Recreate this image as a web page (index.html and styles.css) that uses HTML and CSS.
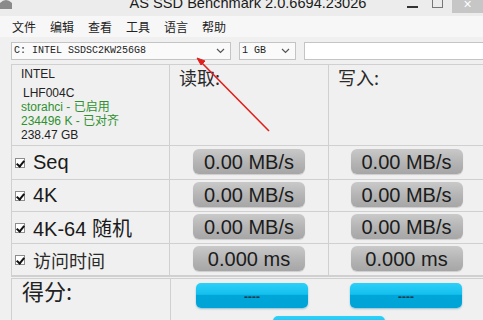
FILE: index.html
```html
<!DOCTYPE html>
<html lang="zh-CN">
<head>
    <meta charset="UTF-8">
    <meta name="viewport" content="width=device-width, initial-scale=1.0">
    <title>AS SSD Benchmark</title>
    <link rel="stylesheet" href="styles.css">
</head>
<body>
    <div class="window">
        <div class="titlebar">
            <svg class="app-icon" width="13" height="10" viewBox="0 0 13 10">
                <path d="M0 10 L0 4 Q6 -2 12 4 L12 10 Z" fill="#8a8a8a"/>
            </svg>
            <div class="title">AS SSD Benchmark 2.0.6694.23026</div>
            <div class="win-btns">
                <span class="win-min"></span>
                <span class="win-max"></span>
                <span class="win-close">×</span>
            </div>
        </div>

        <div class="menubar">
            <span class="menu-item">文件</span>
            <span class="menu-item">编辑</span>
            <span class="menu-item">查看</span>
            <span class="menu-item">工具</span>
            <span class="menu-item">语言</span>
            <span class="menu-item">帮助</span>
        </div>

        <div class="toolbar">
            <div class="combo combo-drive">
                <span>C: INTEL SSDSC2KW256G8</span>
                <svg width="9" height="6" viewBox="0 0 9 6"><path d="M1 1 L4.5 4.5 L8 1" fill="none" stroke="#555" stroke-width="1.2"/></svg>
            </div>
            <div class="combo combo-size">
                <span>1 GB</span>
                <svg width="9" height="6" viewBox="0 0 9 6"><path d="M1 1 L4.5 4.5 L8 1" fill="none" stroke="#555" stroke-width="1.2"/></svg>
            </div>
            <div class="textbox"></div>
        </div>

        <div class="bench">
            <div class="cell info">
                <div class="info-line first">INTEL</div>
                <div class="info-line indent">LHF004C</div>
                <div class="info-line ok">storahci - 已启用</div>
                <div class="info-line ok">234496 K - 已对齐</div>
                <div class="info-line">238.47 GB</div>
            </div>
            <div class="cell head">读取:</div>
            <div class="cell head">写入:</div>

            <div class="cell label"><span class="check"></span><span>Seq</span></div>
            <div class="cell value"><div class="result">0.00 MB/s</div></div>
            <div class="cell value"><div class="result">0.00 MB/s</div></div>

            <div class="cell label"><span class="check"></span><span>4K</span></div>
            <div class="cell value"><div class="result">0.00 MB/s</div></div>
            <div class="cell value"><div class="result">0.00 MB/s</div></div>

            <div class="cell label"><span class="check"></span><span>4K-64 随机</span></div>
            <div class="cell value"><div class="result">0.00 MB/s</div></div>
            <div class="cell value"><div class="result">0.00 MB/s</div></div>

            <div class="cell label"><span class="check"></span><span class="cjk">访问时间</span></div>
            <div class="cell value"><div class="result">0.000 ms</div></div>
            <div class="cell value"><div class="result">0.000 ms</div></div>
        </div>

        <div class="score">
            <div class="score-label">得分:</div>
            <div class="score-area">
                <div class="score-btns">
                    <div class="score-btn">----</div>
                    <div class="score-btn">----</div>
                </div>
                <div class="score-total">
                    <div class="score-btn">----</div>
                </div>
            </div>
        </div>

        <svg class="arrow" width="483" height="320" viewBox="0 0 483 320">
            <line x1="269" y1="131" x2="201" y2="62" stroke="#e0201c" stroke-width="1.6"/>
            <path d="M197 58 L205 61 L201 65 Z" fill="#e0201c" stroke="#e0201c" stroke-width="1"/>
        </svg>
    </div>
</body>
</html>
```

FILE: styles.css
```css
* {
    margin: 0;
    padding: 0;
    box-sizing: border-box;
}

body {
    width: 483px;
    height: 320px;
    overflow: hidden;
    background: #f0f0f0;
    font-family: 'Liberation Sans', Arial, 'Noto Sans CJK SC', sans-serif;
    color: #1a1a1a;
}

.window {
    position: relative;
    height: 320px;
}

/* заголовок окна */
.titlebar {
    height: 16px;
    background: #ececec;
    display: flex;
    align-items: flex-start;
    overflow: hidden;
}

.app-icon {
    display: block;
    margin-top: -1px;
}

.title {
    flex: 1;
    text-align: center;
    font-size: 14.6px;
    line-height: 15px;
    margin-top: -4px;
    padding-left: 76px;
    color: #1a1a1a;
}

.win-btns {
    display: flex;
    align-items: flex-start;
}

.win-min {
    width: 11px;
    height: 2px;
    background: #333;
    margin: 6px 14px 0 0;
}

.win-max {
    width: 11px;
    height: 8px;
    border: 1px solid #777;
    border-top: none;
    margin-right: 9px;
}

.win-close {
    width: 31px;
    height: 13px;
    background: #c6c6c6;
    color: #fff;
    font-size: 14px;
    line-height: 8px;
    text-align: center;
}

/* меню */
.menubar {
    height: 21px;
    background: #f7f7f7;
    display: flex;
    align-items: center;
    padding-left: 12px;
}

.menu-item {
    width: 38px;
    font-size: 12px;
    font-family: 'Noto Sans CJK SC', sans-serif;
    color: #222;
}

.toolbar {
    display: flex;
    align-items: center;
    gap: 8px;
    padding: 3px 0 0 11px;
    height: 24px;
}

.combo {
    height: 18px;
    background: #fafafa;
    border: 1px solid #c4c4c4;
    display: flex;
    align-items: center;
    justify-content: space-between;
    padding: 0 5px 0 2px;
    font-family: 'Liberation Mono', monospace;
    font-size: 10px;
    color: #222;
}

.combo-drive {
    width: 220px;
}

.combo-size {
    width: 57px;
}

.textbox {
    flex: 1;
    height: 18px;
    background: #fff;
    border: 1px solid #c4c4c4;
    border-right: none;
}

/* таблица результатов */
.bench {
    display: grid;
    grid-template-columns: 158px 159px 156px;
    grid-template-rows: 81px 34px 32px 32px 32px;
    margin: 3px 0 0 11px;
    border-top: 1px solid #d0d0d0;
    border-left: 1px solid #d0d0d0;
}

.cell {
    border-right: 1px solid #d0d0d0;
    border-bottom: 1px solid #d0d0d0;
}

.info {
    padding: 2px 0 0 9px;
    font-size: 12px;
    color: #222;
}

.info-line {
    height: 14px;
    line-height: 14px;
    white-space: nowrap;
}

.info-line.first {
    margin-bottom: 5px;
}

.info-line.indent {
    padding-left: 2px;
}

.info-line.ok {
    color: #2f902f;
}

.head {
    padding: 1px 0 0 9px;
    font-family: 'Noto Sans CJK SC', sans-serif;
    font-size: 18px;
    line-height: 22px;
    color: #2a2a2a;
}

.label {
    display: flex;
    align-items: center;
    padding-left: 3px;
    font-size: 20px;
    color: #1a1a1a;
}

.label .cjk {
    font-family: 'Noto Sans CJK SC', sans-serif;
    font-size: 18px;
    color: #2a2a2a;
}

.check {
    width: 10px;
    height: 10px;
    border: 1px solid #8d8d8d;
    background: #fff;
    margin-right: 8px;
    position: relative;
    flex-shrink: 0;
}

.check::after {
    content: '';
    position: absolute;
    left: 2px;
    top: 0;
    width: 3px;
    height: 6px;
    border-right: 2px solid #111;
    border-bottom: 2px solid #111;
    transform: rotate(40deg);
}

.value {
    display: flex;
    align-items: center;
    justify-content: center;
    padding-bottom: 2px;
}

.result {
    width: 112px;
    height: 25px;
    border-radius: 6px;
    background: linear-gradient(#c9c9c9, #b4b4b4 55%, #a6a6a6);
    box-shadow: 0 1px 1px rgba(0,0,0,0.15);
    text-align: center;
    font-size: 20px;
    line-height: 26px;
    color: #1c1c1c;
}

/* итог */
.score {
    display: flex;
    margin-left: 11px;
    border-top: 3px double #d0d0d0;
    height: 60px;
}

.score-label {
    width: 160px;
    border-left: 1px solid #d0d0d0;
    border-right: 1px solid #d0d0d0;
    padding-left: 10px;
    font-family: 'Noto Sans CJK SC', sans-serif;
    font-size: 22px;
    line-height: 22px;
    color: #222;
}

.score-area {
    flex: 1;
    padding-top: 4px;
}

.score-btns {
    display: flex;
    gap: 42px;
    padding-left: 25px;
}

.score-btn {
    width: 112px;
    height: 25px;
    border-radius: 5px;
    background: linear-gradient(#2ed0f8, #14c0ee 45%, #00a6d9 50%, #00a3d6);
    box-shadow: 0 1px 2px rgba(0,120,170,0.4);
    text-align: center;
    font-size: 12px;
    font-weight: bold;
    line-height: 28px;
    color: #1b3a4a;
}

.score-total {
    padding: 8px 0 0 102px;
}

.arrow {
    position: absolute;
    left: 0;
    top: 0;
    pointer-events: none;
}
```
